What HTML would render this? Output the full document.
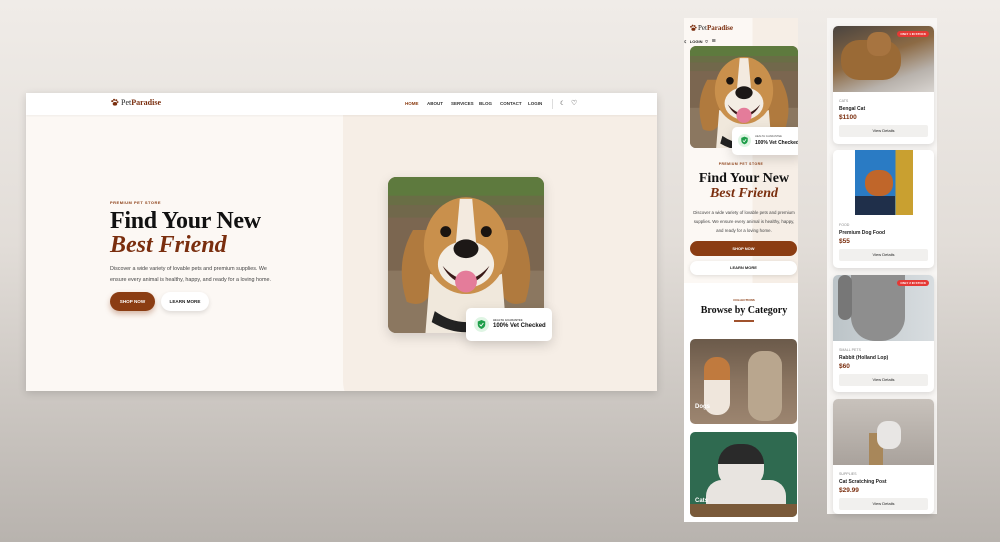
<!DOCTYPE html>
<html><head><meta charset="utf-8">
<style>
*{margin:0;padding:0;box-sizing:border-box}
body{width:1000px;height:542px;overflow:hidden;position:relative;font-family:"Liberation Sans",sans-serif;background:linear-gradient(180deg,#f0ece8 0%,#e2ddd8 45%,#b8b3ae 100%)}
.abs{position:absolute}
.serif{font-family:"Liberation Serif",serif}
.nav a{position:absolute;top:8px;font-size:4.5px;color:#333;font-weight:bold;text-decoration:none}
.sh{box-shadow:0 4px 12px rgba(0,0,0,.15)}
.card{position:absolute;left:6px;width:101px;background:#fff;border-radius:5px;box-shadow:0 2px 6px rgba(0,0,0,.12);overflow:hidden}
.card .img{height:66px;position:relative}
.card .cat{font-size:3.6px;color:#888;margin:7px 0 0 6px}
.card .nm{font-size:5px;font-weight:bold;color:#222;margin:3px 0 0 6px}
.card .pr{font-size:6.5px;font-weight:bold;color:#7a2e0e;margin:2px 0 0 6px}
.card .bt{margin:4px 6px 7px;height:12px;background:#f1f0ee;border-radius:2px;font-size:4px;text-align:center;line-height:12px;color:#222}
.tag{position:absolute;right:5px;top:5px;background:#e53935;color:#fff;font-size:3px;font-weight:bold;padding:1px 3px;border-radius:3px}
</style></head><body>

<svg width="0" height="0" style="position:absolute">
<defs>
<symbol id="dog" viewBox="0 0 100 100" preserveAspectRatio="xMidYMid slice">
<rect width="100" height="100" fill="#7b6650"/>
<rect width="100" height="18" fill="#5e7a3e"/>
<rect y="12" width="100" height="14" fill="#6e6a48" opacity=".7"/>
<rect y="60" width="100" height="40" fill="#8b7760"/>
<path d="M16 34 Q4 55 12 80 Q26 86 30 66 L32 34Z" fill="#b07a3e"/>
<path d="M84 34 Q96 55 88 80 Q74 86 70 66 L68 34Z" fill="#b07a3e"/>
<path d="M24 100 L27 62 Q50 72 73 62 L76 100Z" fill="#f0e8dc"/>
<path d="M30 86 Q50 100 70 86 L72 93 Q50 106 28 93Z" fill="#222"/>
<ellipse cx="50" cy="44" rx="27" ry="31" fill="#c9904c"/>
<path d="M46 14 L54 14 L57 48 L43 48Z" fill="#f3eadf"/>
<ellipse cx="50" cy="56" rx="18" ry="15" fill="#f3ede4"/>
<circle cx="37" cy="35" r="3.5" fill="#1a1410"/><circle cx="63" cy="35" r="3.5" fill="#1a1410"/>
<ellipse cx="50" cy="46" rx="8" ry="6" fill="#1c1816"/>
<path d="M35 57 Q50 74 65 57 Q60 67 50 69 Q40 67 35 57Z" fill="#3a1a18"/>
<ellipse cx="50" cy="67" rx="7" ry="7" fill="#e47c9a"/>
</symbol>
<symbol id="shield" viewBox="0 0 20 20"><circle cx="10" cy="10" r="10" fill="#dff5e4"/><path d="M10 4 L15 6 V10 Q15 14 10 16 Q5 14 5 10 V6Z" fill="#1e9e4a"/><path d="M7.5 10 L9.5 12 L12.5 8" stroke="#fff" stroke-width="1.2" fill="none"/></symbol>
<symbol id="paw" viewBox="0 0 20 20"><circle cx="5" cy="7" r="2.3" fill="#7a2e0e"/><circle cx="9" cy="4" r="2.3" fill="#7a2e0e"/><circle cx="14" cy="5" r="2.3" fill="#7a2e0e"/><circle cx="17" cy="9" r="2" fill="#7a2e0e"/><ellipse cx="11" cy="13" rx="5" ry="4" fill="#7a2e0e"/></symbol>
</defs></svg>

<!-- DESKTOP -->
<div class="abs" style="left:26px;top:93px;width:631px;height:298px;background:#fcf8f4;overflow:hidden;box-shadow:0 2px 8px rgba(0,0,0,.15)">
  <div class="abs" style="left:317px;top:22px;width:330px;height:300px;background:#f6eee6;border-bottom-left-radius:34px"></div>
  <div class="abs nav" style="left:0;top:0;width:631px;height:22px;background:#fff;box-shadow:0 1px 2px rgba(0,0,0,.05)">
    <svg class="abs" style="left:84px;top:5px" width="9" height="9"><use href="#paw"/></svg>
    <div class="abs serif" style="left:95px;top:5px;font-size:8px;color:#222">Pet<b style="color:#7a2e0e">Paradise</b></div>
    <a style="left:379px;color:#8b3d13">HOME</a><a style="left:401px">ABOUT</a><a style="left:425px">SERVICES</a><a style="left:453px">BLOG</a><a style="left:474px">CONTACT</a><a style="left:502px">LOGIN</a>
    <div class="abs" style="left:526px;top:6px;width:1px;height:10px;background:#ddd"></div>
    <div class="abs" style="left:534px;top:7px;font-size:6px;color:#222">☾</div>
    <div class="abs" style="left:545px;top:6px;font-size:7px;color:#222">♡</div>
  </div>
  <div class="abs" style="left:84px;top:107px;font-size:4px;font-weight:bold;color:#8b3d13;letter-spacing:.5px">PREMIUM PET STORE</div>
  <div class="abs serif" style="left:84px;top:116px;font-size:24px;font-weight:bold;color:#111;line-height:24px;letter-spacing:-.3px">Find Your New</div>
  <div class="abs serif" style="left:84px;top:140px;font-size:24px;font-weight:bold;font-style:italic;color:#7a2e0e;line-height:24px">Best Friend</div>
  <div class="abs" style="left:84px;top:171px;width:170px;font-size:5.4px;color:#444;line-height:11px">Discover a wide variety of lovable pets and premium supplies. We ensure every animal is healthy, happy, and ready for a loving home.</div>
  <div class="abs" style="left:84px;top:199px;width:45px;height:19px;border-radius:10px;background:#8b3d13;color:#fff;font-size:4.6px;font-weight:bold;text-align:center;line-height:19px;box-shadow:0 3px 6px rgba(139,61,19,.35)">SHOP NOW</div>
  <div class="abs" style="left:135px;top:199px;width:48px;height:19px;border-radius:10px;background:#fff;color:#222;font-size:4.6px;font-weight:bold;text-align:center;line-height:19px;box-shadow:0 2px 5px rgba(0,0,0,.12)">LEARN MORE</div>
  <svg class="abs sh" style="left:362px;top:84px;border-radius:8px" width="156" height="156"><use href="#dog" width="156" height="156"/></svg>
  <div class="abs sh" style="left:440px;top:215px;width:86px;height:33px;background:#fff;border-radius:5px">
    <svg class="abs" style="left:8px;top:9px" width="15" height="15"><use href="#shield"/></svg>
    <div class="abs" style="left:27px;top:10px;font-size:2.8px;font-weight:bold;color:#555">HEALTH GUARANTEE</div>
    <div class="abs" style="left:27px;top:15px;font-size:6px;font-weight:bold;color:#111">100% Vet Checked</div>
  </div>
</div>

<!-- MOBILE -->
<div class="abs" style="left:684px;top:18px;width:114px;height:504px;background:#fff;overflow:hidden">
  <div class="abs" style="left:0;top:0;width:114px;height:265px;background:linear-gradient(90deg,#fcf8f4 60%,#f6eee6 60%)"></div>
  <svg class="abs" style="left:5px;top:6px" width="8" height="8"><use href="#paw"/></svg>
  <div class="abs serif" style="left:14px;top:6px;font-size:7px;color:#222">Pet<b style="color:#7a2e0e">Paradise</b></div>
  <div class="abs" style="left:0;top:20px;font-size:4px;font-weight:bold;color:#222">☾&nbsp; LOGIN&nbsp; ♡ &nbsp;&nbsp;<span style="font-size:7px">≡</span></div>
  <svg class="abs" style="left:6px;top:28px;border-radius:6px" width="108" height="102"><use href="#dog" width="108" height="102"/></svg>
  <div class="abs sh" style="left:48px;top:109px;width:70px;height:28px;background:#fff;border-radius:5px">
    <svg class="abs" style="left:6px;top:7px" width="13" height="13"><use href="#shield"/></svg>
    <div class="abs" style="left:23px;top:8px;font-size:2.6px;color:#555">HEALTH GUARANTEE</div>
    <div class="abs" style="left:23px;top:13px;font-size:5px;font-weight:bold;color:#111">100% Vet Checked</div>
  </div>
  <div class="abs" style="left:0;width:114px;top:144px;text-align:center;font-size:3.4px;font-weight:bold;color:#8b3d13;letter-spacing:.5px">PREMIUM PET STORE</div>
  <div class="abs serif" style="left:0;width:120px;top:153px;text-align:center;font-size:14px;font-weight:bold;color:#111;line-height:15px">Find Your New</div>
  <div class="abs serif" style="left:0;width:120px;top:168px;text-align:center;font-size:14px;font-weight:bold;font-style:italic;color:#7a2e0e;line-height:15px">Best Friend</div>
  <div class="abs" style="left:8px;width:104px;top:190px;text-align:center;font-size:4.4px;color:#444;line-height:9px">Discover a wide variety of lovable pets and premium supplies. We ensure every animal is healthy, happy, and ready for a loving home.</div>
  <div class="abs" style="left:6px;top:223px;width:107px;height:15px;border-radius:8px;background:#8b3d13;color:#fff;font-size:4px;font-weight:bold;text-align:center;line-height:15px">SHOP NOW</div>
  <div class="abs" style="left:6px;top:243px;width:107px;height:14px;border-radius:8px;background:#fff;color:#222;font-size:4px;font-weight:bold;text-align:center;line-height:14px;box-shadow:0 1px 4px rgba(0,0,0,.12)">LEARN MORE</div>
  <div class="abs" style="left:0;width:120px;top:280px;text-align:center;font-size:3px;font-weight:bold;color:#8b3d13">COLLECTIONS</div>
  <div class="abs serif" style="left:0;width:120px;top:287px;text-align:center;font-size:10px;font-weight:bold;color:#111">Browse by Category</div>
  <div class="abs" style="left:50px;top:302px;width:20px;height:1.5px;background:#a0522d"></div>
  <div class="abs" style="left:6px;top:321px;width:107px;height:85px;border-radius:5px;overflow:hidden;background:linear-gradient(180deg,#6b5a4a 0%,#8a7460 50%,#9c8570 100%)">
    <div class="abs" style="left:14px;top:18px;width:26px;height:58px;border-radius:12px;background:linear-gradient(180deg,#c07a3e 40%,#efe6dc 40%)"></div>
    <div class="abs" style="left:58px;top:12px;width:34px;height:70px;border-radius:14px;background:#b9a68e"></div>
    <div class="abs" style="left:5px;top:65px;font-size:6px;font-weight:bold;color:#fff">Dogs</div>
  </div>
  <div class="abs" style="left:6px;top:414px;width:107px;height:85px;border-radius:5px;overflow:hidden;background:#2f6a50">
    <div class="abs" style="left:28px;top:12px;width:46px;height:44px;border-radius:20px 20px 18px 18px;background:linear-gradient(180deg,#2a2a2a 45%,#e8e4e0 45%)"></div>
    <div class="abs" style="left:16px;top:48px;width:80px;height:40px;border-radius:16px;background:#e8e4e0"></div>
    <div class="abs" style="left:0;top:72px;width:107px;height:13px;background:#7a5a3a"></div>
    <div class="abs" style="left:5px;top:66px;font-size:6px;font-weight:bold;color:#fff">Cats</div>
  </div>
</div>

<!-- PRODUCTS -->
<div class="abs" style="left:827px;top:18px;width:110px;height:496px;background:#f8f6f4">
  <div class="card" style="top:8px;height:118px"><div class="img" style="background:linear-gradient(160deg,#4a4440 0%,#8c6a44 45%,#b8b2ac 75%,#d8d4d0 100%)"><div class="abs" style="left:8px;top:14px;width:60px;height:40px;border-radius:18px;background:#9a6a36"></div><div class="abs" style="left:34px;top:6px;width:24px;height:24px;border-radius:10px;background:#a77440"></div><span class="tag">ONLY 1 IN STOCK</span></div><div class="cat">CATS</div><div class="nm">Bengal Cat</div><div class="pr">$1100</div><div class="bt">View Details</div></div>
  <div class="card" style="top:132px;height:118px"><div class="img" style="background:#fff"><div class="abs" style="left:22px;top:0;width:58px;height:65px;background:linear-gradient(90deg,#2a7bc4 70%,#c9a030 70%)"><div class="abs" style="left:10px;top:20px;width:28px;height:26px;border-radius:12px;background:#c0662a"></div><div class="abs" style="left:0;top:46px;width:40px;height:19px;background:#1f2f4a"></div></div></div><div class="cat">FOOD</div><div class="nm">Premium Dog Food</div><div class="pr">$55</div><div class="bt">View Details</div></div>
  <div class="card" style="top:257px;height:117px"><div class="img" style="background:linear-gradient(90deg,#bcc4c8,#d8dde0)"><div class="abs" style="left:18px;top:0;width:54px;height:66px;border-radius:0 0 24px 24px;background:#8e8e8e"></div><div class="abs" style="left:5px;top:0;width:14px;height:45px;border-radius:8px;background:#777"></div><span class="tag">ONLY 2 IN STOCK</span></div><div class="cat">SMALL PETS</div><div class="nm">Rabbit (Holland Lop)</div><div class="pr">$60</div><div class="bt">View Details</div></div>
  <div class="card" style="top:381px;height:115px"><div class="img" style="background:linear-gradient(180deg,#c8c2bc,#a9a29c)"><div class="abs" style="left:36px;top:34px;width:14px;height:32px;background:#a8875a"></div><div class="abs" style="left:44px;top:22px;width:24px;height:28px;border-radius:10px;background:#e8e6e4"></div></div><div class="cat">SUPPLIES</div><div class="nm">Cat Scratching Post</div><div class="pr">$29.99</div><div class="bt">View Details</div></div>
</div>
</body></html>
